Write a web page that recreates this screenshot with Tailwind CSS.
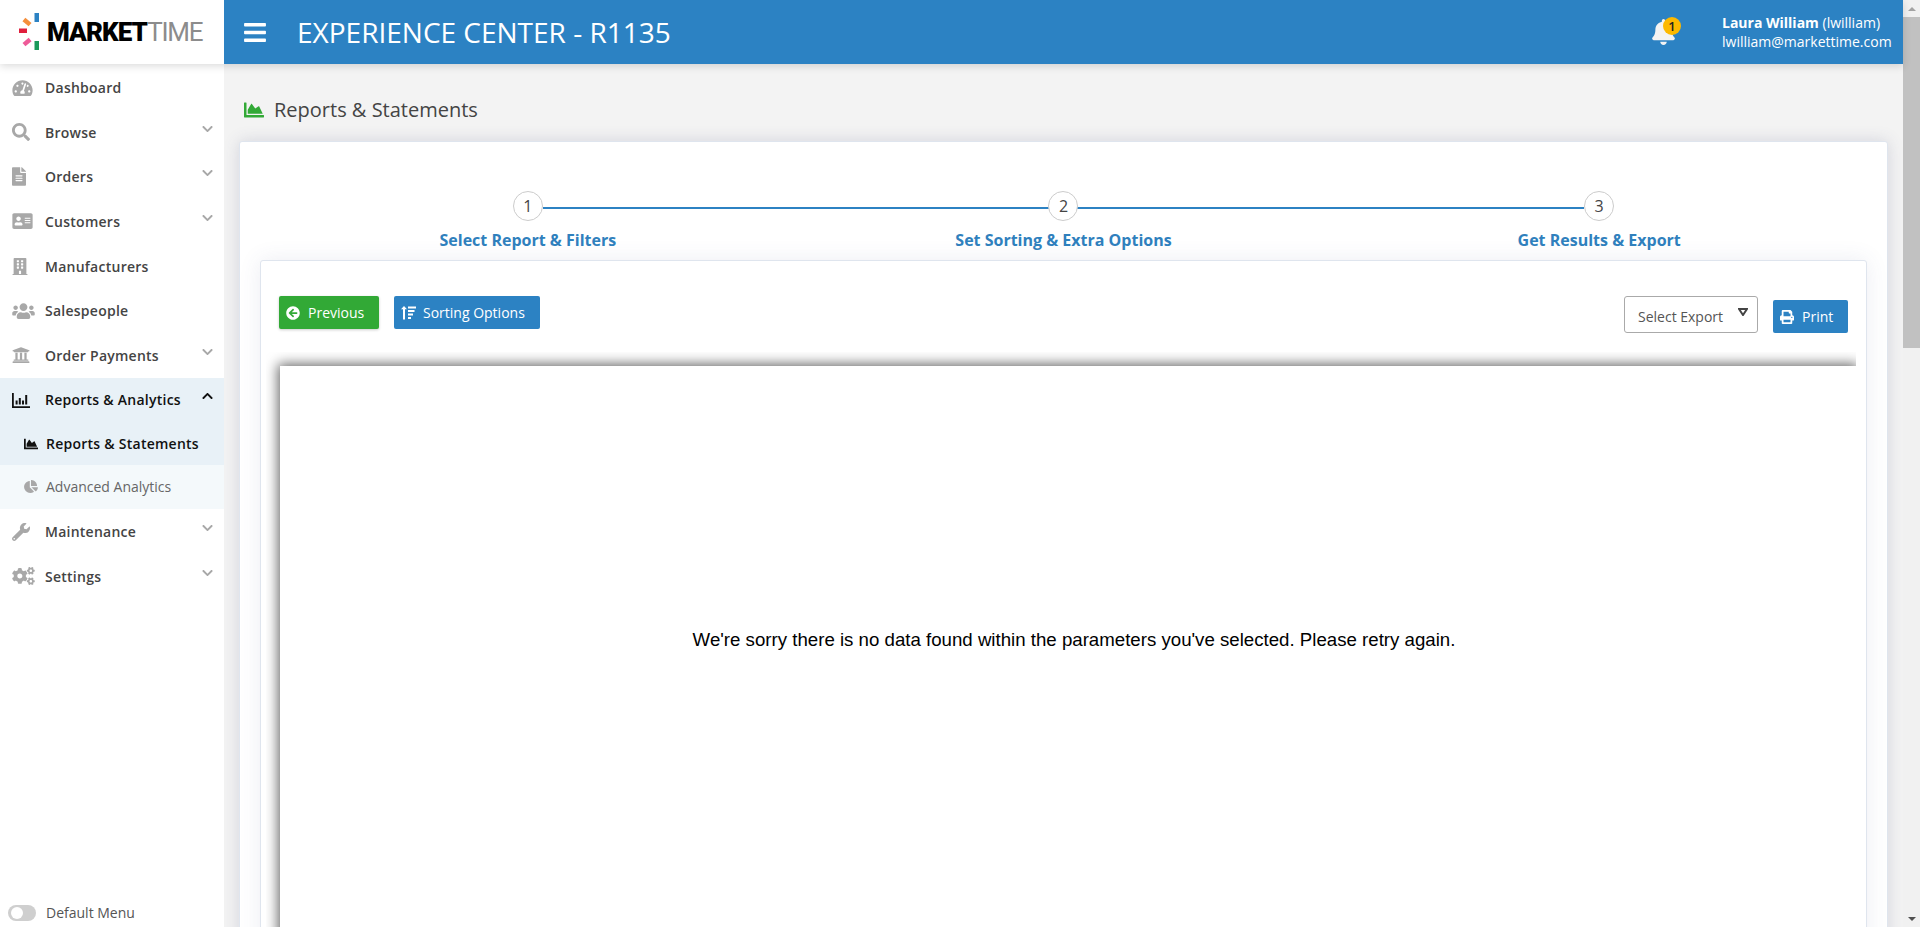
<!DOCTYPE html>
<html lang="en">
<head>
<meta charset="utf-8">
<title>Reports & Statements</title>
<script src="https://cdn.jsdelivr.net/npm/@tailwindcss/browser@4"></script>
</head>
<body class="m-0 overflow-hidden bg-[#f3f3f3] font-['Open_Sans',sans-serif]">
<div class="flex h-[927px] w-[1920px] overflow-hidden">
  <div class="flex h-full w-[1903px] flex-col">
    <!-- Top bar -->
    <header class="relative z-20 flex h-[64px] shrink-0 bg-[#2c82c3] shadow-[0_2px_8px_rgba(0,0,0,0.15)]">
      <div class="flex w-[224px] shrink-0 items-center bg-white pl-[18px]">
        <svg class="h-[38px] w-[24px] shrink-0" viewBox="0 0 24 38">
          <rect x="16.5" y="0" width="4.5" height="9" fill="#2c82c3"/>
          <rect x="16.5" y="28" width="4.5" height="9" fill="#1c9a5b"/>
          <rect x="1" y="15.5" width="8" height="4.5" fill="#e01f3d"/>
          <rect x="5" y="6.8" width="8" height="4.5" fill="#f58f3c" transform="rotate(40 9 9)"/>
          <rect x="5" y="26.8" width="8" height="4.5" fill="#ee5b98" transform="rotate(-40 9 29)"/>
        </svg>
        <span class="ml-[5px] font-['Roboto',sans-serif] text-[26px] leading-none font-black tracking-[-0.9px] text-black">MARKET</span><span class="ml-[0px] font-['Roboto',sans-serif] text-[26px] leading-none font-normal tracking-[-1.2px] text-[#8c8c8c]">TIME</span>
      </div>
      <div class="flex flex-1 items-center">
        <svg class="ml-[20px] h-[25px] w-[22px] fill-white" viewBox="0 0 448 512"><path d="M16 132h416c8.837 0 16-7.163 16-16V76c0-8.837-7.163-16-16-16H16C7.163 60 0 67.163 0 76v40c0 8.837 7.163 16 16 16zm0 160h416c8.837 0 16-7.163 16-16v-40c0-8.837-7.163-16-16-16H16c-8.837 0-16 7.163-16 16v40c0 8.837 7.163 16 16 16zm0 160h416c8.837 0 16-7.163 16-16v-40c0-8.837-7.163-16-16-16H16c-8.837 0-16 7.163-16 16v40c0 8.837 7.163 16 16 16z"/></svg>
        <h1 class="ml-[31px] text-[28px] leading-none font-normal text-white">EXPERIENCE CENTER - R1135</h1>
        <svg class="mr-[47px] ml-auto h-[26px] w-[23px] fill-[#f3f3f3]" viewBox="0 0 448 512"><path d="M224 512c35.32 0 63.97-28.65 63.97-64H160.03c0 35.35 28.65 64 63.97 64zm215.39-149.71c-19.32-20.76-55.47-51.99-55.47-154.29 0-77.7-54.48-139.9-127.94-155.16V32c0-17.67-14.32-32-31.98-32s-31.98 14.33-31.98 32v20.84C118.56 68.1 64.08 130.3 64.08 208c0 102.3-36.15 133.53-55.47 154.29-6 6.45-8.66 14.16-8.61 21.71.11 16.4 12.98 32 32.1 32h383.8c19.12 0 32-15.6 32.1-32 .05-7.55-2.61-15.27-8.61-21.71z"/></svg>
        <div class="mr-[13px] w-[168px] text-[14px] leading-[19px] whitespace-nowrap text-white">
          <div><span class="font-bold">Laura William</span> (lwilliam)</div>
          <div>lwilliam@markettime.com</div>
        </div>
      </div>
      <span class="absolute top-[17px] left-[1663px] flex h-[18px] w-[18px] items-center justify-center rounded-full bg-[#fdb900] text-[13px] leading-none font-semibold text-[#222]">1</span>
    </header>

    <div class="flex min-h-0 flex-1">
      <!-- Sidebar -->
      <aside class="relative z-10 flex w-[224px] shrink-0 flex-col bg-white pt-[1.4px]">
        <nav class="flex flex-col text-[14px] font-semibold tracking-[0.25px] text-[#444]">
          <a class="flex h-[44.6px] items-center pl-[12px]"><span class="flex w-[33px] shrink-0"><svg class="h-[18px] w-[21px] fill-[#a8a8a8]" viewBox="0 0 576 512"><path d="M288 32C128.94 32 0 160.94 0 320c0 52.8 14.25 102.26 39.06 144.8 5.61 9.62 16.3 15.2 27.44 15.2h443c11.14 0 21.83-5.58 27.44-15.2C561.75 422.26 576 372.8 576 320c0-159.06-128.94-288-288-288zm0 64c14.71 0 26.58 10.13 30.32 23.65-1.11 2.26-2.64 4.23-3.45 6.67l-9.22 27.67c-5.13 3.49-10.97 6.01-17.64 6.01-17.67 0-32-14.33-32-32S270.33 96 288 96zM96 384c-17.67 0-32-14.33-32-32s14.33-32 32-32 32 14.33 32 32-14.33 32-32 32zm48-160c-17.67 0-32-14.33-32-32s14.33-32 32-32 32 14.33 32 32-14.33 32-32 32zm246.77-72.41l-61.33 184C343.13 347.33 352 364.54 352 384c0 11.72-3.38 22.55-8.88 32H232.88c-5.5-9.45-8.88-20.28-8.88-32 0-33.94 26.5-61.43 59.9-63.59l61.34-184.01c4.17-12.56 17.73-19.45 30.36-15.17 12.57 4.19 19.35 17.79 15.17 30.36zm14.66 57.2l15.52-46.55c3.47-1.29 7.13-2.23 11.05-2.23 17.67 0 32 14.33 32 32s-14.33 32-32 32c-11.38-.01-20.89-6.28-26.57-15.22zM480 384c-17.67 0-32-14.33-32-32s14.33-32 32-32 32 14.33 32 32-14.33 32-32 32z"/></svg></span>Dashboard</a>

          <a class="flex h-[44.6px] items-center pl-[12px]"><span class="flex w-[33px] shrink-0"><svg class="h-[18px] w-[18px] fill-[#a8a8a8]" viewBox="0 0 512 512"><path d="M505 442.7L405.3 343c-4.5-4.5-10.6-7-17-7H372c27.6-35.3 44-79.7 44-128C416 93.1 322.9 0 208 0S0 93.1 0 208s93.1 208 208 208c48.3 0 92.7-16.4 128-44v16.3c0 6.4 2.5 12.5 7 17l99.7 99.7c9.4 9.4 24.6 9.4 33.9 0l28.3-28.3c9.4-9.4 9.4-24.6.1-34zM208 336c-70.7 0-128-57.2-128-128 0-70.7 57.2-128 128-128 70.7 0 128 57.2 128 128 0 70.7-57.2 128-128 128z"/></svg></span>Browse<svg class="mr-[11px] mb-[7px] ml-auto h-[12px] w-[11px] fill-[#a8a8a8]" viewBox="0 0 448 512"><path d="M207.029 381.476L12.686 187.132c-9.373-9.373-9.373-24.569 0-33.941l22.667-22.667c9.357-9.357 24.522-9.375 33.901-.04L224 284.505l154.745-154.021c9.379-9.335 24.544-9.317 33.901.04l22.667 22.667c9.373 9.373 9.373 24.569 0 33.941L240.971 381.476c-9.373 9.372-24.569 9.372-33.942 0z"/></svg></a>

          <a class="flex h-[44.6px] items-center pl-[12px]"><span class="flex w-[33px] shrink-0"><svg class="h-[19px] w-[14px] fill-[#a8a8a8]" viewBox="0 0 384 512"><path d="M224 136V0H24C10.7 0 0 10.7 0 24v464c0 13.3 10.7 24 24 24h336c13.3 0 24-10.7 24-24V160H248c-13.2 0-24-10.8-24-24zm64 236c0 6.6-5.4 12-12 12H108c-6.6 0-12-5.4-12-12v-8c0-6.6 5.4-12 12-12h168c6.6 0 12 5.4 12 12v8zm0-64c0 6.6-5.4 12-12 12H108c-6.6 0-12-5.4-12-12v-8c0-6.6 5.4-12 12-12h168c6.6 0 12 5.4 12 12v8zm0-72v8c0 6.6-5.4 12-12 12H108c-6.6 0-12-5.4-12-12v-8c0-6.6 5.4-12 12-12h168c6.6 0 12 5.4 12 12zm96-114.1v6.1H256V0h6.1c6.4 0 12.5 2.5 17 7l97.9 98c4.5 4.5 7 10.6 7 16.9z"/></svg></span>Orders<svg class="mr-[11px] mb-[7px] ml-auto h-[12px] w-[11px] fill-[#a8a8a8]" viewBox="0 0 448 512"><path d="M207.029 381.476L12.686 187.132c-9.373-9.373-9.373-24.569 0-33.941l22.667-22.667c9.357-9.357 24.522-9.375 33.901-.04L224 284.505l154.745-154.021c9.379-9.335 24.544-9.317 33.901.04l22.667 22.667c9.373 9.373 9.373 24.569 0 33.941L240.971 381.476c-9.373 9.372-24.569 9.372-33.942 0z"/></svg></a>

          <a class="flex h-[44.6px] items-center pl-[12px]"><span class="flex w-[33px] shrink-0"><svg class="h-[18px] w-[21px] fill-[#a8a8a8]" viewBox="0 0 576 512"><path d="M528 32H48C21.5 32 0 53.5 0 80v352c0 26.5 21.5 48 48 48h480c26.5 0 48-21.5 48-48V80c0-26.5-21.5-48-48-48zm-352 96c35.3 0 64 28.7 64 64s-28.7 64-64 64-64-28.7-64-64 28.7-64 64-64zm112 236.8c0 10.6-10 19.2-22.4 19.2H86.4C74 384 64 375.4 64 364.8v-19.2c0-31.8 30.1-57.6 67.2-57.6h5c12.3 5.1 25.7 8 39.8 8s27.6-2.9 39.8-8h5c37.1 0 67.2 25.8 67.2 57.6v19.2zM512 312c0 4.4-3.6 8-8 8H360c-4.4 0-8-3.6-8-8v-16c0-4.4 3.6-8 8-8h144c4.4 0 8 3.6 8 8v16zm0-64c0 4.4-3.6 8-8 8H360c-4.4 0-8-3.6-8-8v-16c0-4.4 3.6-8 8-8h144c4.4 0 8 3.6 8 8v16zm0-64c0 4.4-3.6 8-8 8H360c-4.4 0-8-3.6-8-8v-16c0-4.4 3.6-8 8-8h144c4.4 0 8 3.6 8 8v16z"/></svg></span>Customers<svg class="mr-[11px] mb-[7px] ml-auto h-[12px] w-[11px] fill-[#a8a8a8]" viewBox="0 0 448 512"><path d="M207.029 381.476L12.686 187.132c-9.373-9.373-9.373-24.569 0-33.941l22.667-22.667c9.357-9.357 24.522-9.375 33.901-.04L224 284.505l154.745-154.021c9.379-9.335 24.544-9.317 33.901.04l22.667 22.667c9.373 9.373 9.373 24.569 0 33.941L240.971 381.476c-9.373 9.372-24.569 9.372-33.942 0z"/></svg></a>

          <a class="flex h-[44.6px] items-center pl-[12px]"><span class="flex w-[33px] shrink-0"><svg class="h-[17px] w-[16px] fill-[#a8a8a8]" viewBox="0 0 448 512"><path d="M436 480h-20V24c0-13.255-10.745-24-24-24H56C42.745 0 32 10.745 32 24v456H12c-6.627 0-12 5.373-12 12v20h448v-20c0-6.627-5.373-12-12-12zM128 76c0-6.627 5.373-12 12-12h40c6.627 0 12 5.373 12 12v40c0 6.627-5.373 12-12 12h-40c-6.627 0-12-5.373-12-12V76zm0 96c0-6.627 5.373-12 12-12h40c6.627 0 12 5.373 12 12v40c0 6.627-5.373 12-12 12h-40c-6.627 0-12-5.373-12-12v-40zm52 148h-40c-6.627 0-12-5.373-12-12v-40c0-6.627 5.373-12 12-12h40c6.627 0 12 5.373 12 12v40c0 6.627-5.373 12-12 12zm76 160h-64v-84c0-6.627 5.373-12 12-12h40c6.627 0 12 5.373 12 12v84zm64-172c0 6.627-5.373 12-12 12h-40c-6.627 0-12-5.373-12-12v-40c0-6.627 5.373-12 12-12h40c6.627 0 12 5.373 12 12v40zm0-96c0 6.627-5.373 12-12 12h-40c-6.627 0-12-5.373-12-12v-40c0-6.627 5.373-12 12-12h40c6.627 0 12 5.373 12 12v40zm0-96c0 6.627-5.373 12-12 12h-40c-6.627 0-12-5.373-12-12V76c0-6.627 5.373-12 12-12h40c6.627 0 12 5.373 12 12v40z"/></svg></span>Manufacturers</a>

          <a class="flex h-[44.6px] items-center pl-[12px]"><span class="flex w-[33px] shrink-0"><svg class="h-[18px] w-[23px] fill-[#a8a8a8]" viewBox="0 0 640 512"><path d="M96 224c35.3 0 64-28.7 64-64s-28.7-64-64-64-64 28.7-64 64 28.7 64 64 64zm448 0c35.3 0 64-28.7 64-64s-28.7-64-64-64-64 28.7-64 64 28.7 64 64 64zm32 32h-64c-17.6 0-33.5 7.1-45.1 18.6 40.3 22.1 68.9 62 75.1 109.4h66c17.7 0 32-14.3 32-32v-32c0-35.3-28.7-64-64-64zm-256 0c61.9 0 112-50.1 112-112S381.9 32 320 32 208 82.1 208 144s50.1 112 112 112zm76.8 32h-8.3c-20.8 10-43.9 16-68.5 16s-47.6-6-68.5-16h-8.3C179.6 288 128 339.6 128 403.2V432c0 26.5 21.5 48 48 48h288c26.5 0 48-21.5 48-48v-28.8c0-63.6-51.6-115.2-115.2-115.2zm-223.7-13.4C161.5 263.1 145.6 256 128 256H64c-35.3 0-64 28.7-64 64v32c0 17.7 14.3 32 32 32h65.9c6.3-47.4 34.9-87.3 75.2-109.4z"/></svg></span>Salespeople</a>

          <a class="flex h-[44.6px] items-center pl-[12px]"><span class="flex w-[33px] shrink-0"><svg class="h-[18px] w-[18px] fill-[#a8a8a8]" viewBox="0 0 512 512"><path d="M496 128v16a8 8 0 0 1-8 8h-24v12c0 6.627-5.373 12-12 12H60c-6.627 0-12-5.373-12-12v-12H24a8 8 0 0 1-8-8v-16a8 8 0 0 1 4.941-7.392l232-88a7.996 7.996 0 0 1 6.118 0l232 88A8 8 0 0 1 496 128zm-24 304H40c-13.255 0-24 10.745-24 24v16a8 8 0 0 0 8 8h464a8 8 0 0 0 8-8v-16c0-13.255-10.745-24-24-24zM96 192v192H60c-6.627 0-12 5.373-12 12v20h416v-20c0-6.627-5.373-12-12-12h-36V192h-64v192h-64V192h-64v192h-64V192H96z"/></svg></span>Order Payments<svg class="mr-[11px] mb-[7px] ml-auto h-[12px] w-[11px] fill-[#a8a8a8]" viewBox="0 0 448 512"><path d="M207.029 381.476L12.686 187.132c-9.373-9.373-9.373-24.569 0-33.941l22.667-22.667c9.357-9.357 24.522-9.375 33.901-.04L224 284.505l154.745-154.021c9.379-9.335 24.544-9.317 33.901.04l22.667 22.667c9.373 9.373 9.373 24.569 0 33.941L240.971 381.476c-9.373 9.372-24.569 9.372-33.942 0z"/></svg></a>

          <a class="flex h-[44.6px] items-center bg-[#e8f1f7] pl-[12px] text-[#111]"><span class="flex w-[33px] shrink-0"><svg class="h-[16px] w-[18px] fill-[#111]" viewBox="0 0 18 16"><path d="M0 1h1.8v13.2H18V16H0z"/><rect x="3.6" y="8.5" width="2" height="4"/><rect x="6.8" y="6" width="2" height="6.5"/><rect x="10" y="8.5" width="2" height="4"/><rect x="13.2" y="3" width="2" height="9.5"/></svg></span>Reports &amp; Analytics<svg class="mr-[11px] mb-[7px] ml-auto h-[12px] w-[11px] rotate-180 fill-[#111]" viewBox="0 0 448 512"><path d="M207.029 381.476L12.686 187.132c-9.373-9.373-9.373-24.569 0-33.941l22.667-22.667c9.357-9.357 24.522-9.375 33.901-.04L224 284.505l154.745-154.021c9.379-9.335 24.544-9.317 33.901.04l22.667 22.667c9.373 9.373 9.373 24.569 0 33.941L240.971 381.476c-9.373 9.372-24.569 9.372-33.942 0z"/></svg></a>

          <a class="flex h-[42.8px] items-center bg-[#e8f1f7] pl-[24px] text-[#111]"><span class="flex w-[22px] shrink-0"><svg class="h-[14px] w-[14px] fill-[#111]" viewBox="0 0 512 512"><path d="M500 384c6.6 0 12 5.4 12 12v40c0 6.6-5.4 12-12 12H12c-6.6 0-12-5.4-12-12V76c0-6.6 5.4-12 12-12h40c6.6 0 12 5.4 12 12v308h436zM372.7 159.5L288 216l-85.3-113.7c-5.1-6.8-15.5-6.3-19.9 1L96 248v104h384l-89.9-187.8c-3.2-6.5-11.4-8.7-17.4-4.7z"/></svg></span>Reports &amp; Statements</a>

          <a class="flex h-[44.4px] items-center bg-[#f4f9fb] pb-[1px] pl-[24px] font-normal tracking-normal text-[#666]"><span class="flex w-[22px] shrink-0"><svg class="h-[13px] w-[14px] fill-[#a8a8a8]" viewBox="0 0 544 512"><path d="M527.79 288H290.5l158.03 158.03c6.04 6.04 15.98 6.53 22.19.68 38.7-36.46 65.32-85.61 73.13-140.86 1.34-9.46-6.51-17.85-16.06-17.85zm-15.83-64.8C503.72 103.74 408.26 8.28 288.8.04 279.68-.59 272 7.1 272 16.24V240h223.77c9.14 0 16.82-7.68 16.19-16.8zM224 288V50.71c0-9.55-8.39-17.4-17.84-16.06C86.99 51.49-4.1 155.6.14 280.37 4.5 408.51 114.83 513.59 243.03 511.98c50.4-.63 96.97-16.87 135.26-44.03 7.9-5.6 8.42-17.23 1.57-24.08L224 288z"/></svg></span>Advanced Analytics</a>

          <a class="flex h-[44.6px] items-center pl-[12px]"><span class="flex w-[33px] shrink-0"><svg class="h-[18px] w-[18px] fill-[#a8a8a8]" viewBox="0 0 512 512"><path d="M507.73 109.1c-2.24-9.03-13.54-12.09-20.12-5.51l-74.36 74.36-67.88-11.31-11.31-67.88 74.36-74.36c6.62-6.62 3.43-17.9-5.66-20.16-47.38-11.74-99.55.91-136.58 37.93-39.64 39.64-50.55 97.1-34.05 147.2L18.74 402.76c-24.99 24.99-24.99 65.51 0 90.5 24.99 24.99 65.51 24.99 90.5 0l213.21-213.21c50.12 16.71 107.47 5.68 147.37-34.22 37.07-37.07 49.7-89.32 37.91-136.73zM64 472c-13.25 0-24-10.75-24-24 0-13.26 10.75-24 24-24s24 10.74 24 24c0 13.25-10.75 24-24 24z"/></svg></span>Maintenance<svg class="mr-[11px] mb-[7px] ml-auto h-[12px] w-[11px] fill-[#a8a8a8]" viewBox="0 0 448 512"><path d="M207.029 381.476L12.686 187.132c-9.373-9.373-9.373-24.569 0-33.941l22.667-22.667c9.357-9.357 24.522-9.375 33.901-.04L224 284.505l154.745-154.021c9.379-9.335 24.544-9.317 33.901.04l22.667 22.667c9.373 9.373 9.373 24.569 0 33.941L240.971 381.476c-9.373 9.372-24.569 9.372-33.942 0z"/></svg></a>

          <a class="flex h-[44.6px] items-center pl-[12px]"><span class="flex w-[33px] shrink-0"><svg class="h-[18px] w-[23px] fill-[#a8a8a8]" viewBox="0 0 640 512"><path d="M512.1 191l-8.2 14.3c-3 5.3-9.4 7.5-15.1 5.4-11.8-4.4-22.6-10.7-32.1-18.6-4.6-3.8-5.8-10.5-2.8-15.7l8.2-14.3c-6.9-8-12.3-17.3-15.9-27.4h-16.5c-6 0-11.2-4.3-12.2-10.3-2-12-2.1-24.6 0-37.1 1-6 6.2-10.4 12.2-10.4h16.5c3.6-10.1 9-19.4 15.9-27.4l-8.2-14.3c-3-5.2-1.9-11.9 2.8-15.7 9.5-7.9 20.4-14.2 32.1-18.6 5.7-2.1 12.1.1 15.1 5.4l8.2 14.3c10.5-1.9 21.2-1.9 31.7 0L552 6.3c3-5.3 9.4-7.5 15.1-5.4 11.8 4.4 22.6 10.7 32.1 18.6 4.6 3.8 5.8 10.5 2.8 15.7l-8.2 14.3c6.9 8 12.3 17.3 15.9 27.4h16.5c6 0 11.2 4.3 12.2 10.3 2 12 2.1 24.6 0 37.1-1 6-6.2 10.4-12.2 10.4h-16.5c-3.6 10.1-9 19.4-15.9 27.4l8.2 14.3c3 5.2 1.9 11.9-2.8 15.7-9.5 7.9-20.4 14.2-32.1 18.6-5.7 2.1-12.1-.1-15.1-5.4l-8.2-14.3c-10.4 1.9-21.2 1.9-31.7 0zm-10.5-58.8c38.5 29.6 82.4-14.3 52.8-52.8-38.5-29.7-82.4 14.3-52.8 52.8zM386.3 286.1l33.7 16.8c10.1 5.8 14.5 18.1 10.5 29.1-8.9 24.2-26.4 46.4-42.6 65.8-7.4 8.9-20.2 11.1-30.3 5.3l-29.1-16.8c-16 13.7-34.6 24.6-54.9 31.7v33.6c0 11.6-8.3 21.6-19.7 23.6-24.6 4.2-50.4 4.4-75.9 0-11.5-2-20-11.9-20-23.6V418c-20.3-7.2-38.9-18-54.9-31.7L74 403c-10 5.8-22.9 3.6-30.3-5.3-16.2-19.4-33.3-41.6-42.2-65.7-4-10.9.4-23.2 10.5-29.1l33.3-16.8c-3.9-20.9-3.9-42.4 0-63.4L12 205.8c-10.1-5.8-14.6-18.1-10.5-29 8.9-24.2 26-46.4 42.2-65.8 7.4-8.9 20.2-11.1 30.3-5.3l29.1 16.8c16-13.7 34.6-24.6 54.9-31.7V57.1c0-11.5 8.2-21.5 19.6-23.5 24.6-4.2 50.5-4.4 76-.1 11.5 2 20 11.9 20 23.6v33.6c20.3 7.2 38.9 18 54.9 31.7l29.1-16.8c10-5.8 22.9-3.6 30.3 5.3 16.2 19.4 33.2 41.6 42.1 65.8 4 10.9.1 23.2-10 29.1l-33.7 16.8c3.9 21 3.9 42.5 0 63.5zm-117.6 21.1c59.2-77-28.7-164.9-105.7-105.7-59.2 77 28.7 164.9 105.7 105.7zm243.4 182.7l-8.2 14.3c-3 5.3-9.4 7.5-15.1 5.4-11.8-4.4-22.6-10.7-32.1-18.6-4.6-3.8-5.8-10.5-2.8-15.7l8.2-14.3c-6.9-8-12.3-17.3-15.9-27.4h-16.5c-6 0-11.2-4.3-12.2-10.3-2-12-2.1-24.6 0-37.1 1-6 6.2-10.4 12.2-10.4h16.5c3.6-10.1 9-19.4 15.9-27.4l-8.2-14.3c-3-5.2-1.9-11.9 2.8-15.7 9.5-7.9 20.4-14.2 32.1-18.6 5.7-2.1 12.1.1 15.1 5.4l8.2 14.3c10.5-1.9 21.2-1.9 31.7 0l8.2-14.3c3-5.3 9.4-7.5 15.1-5.4 11.8 4.4 22.6 10.7 32.1 18.6 4.6 3.8 5.8 10.5 2.8 15.7l-8.2 14.3c6.9 8 12.3 17.3 15.9 27.4h16.5c6 0 11.2 4.3 12.2 10.3 2 12 2.1 24.6 0 37.1-1 6-6.2 10.4-12.2 10.4h-16.5c-3.6 10.1-9 19.4-15.9 27.4l8.2 14.3c3 5.2 1.9 11.9-2.8 15.7-9.5 7.9-20.4 14.2-32.1 18.6-5.7 2.1-12.1-.1-15.1-5.4l-8.2-14.3c-10.4 1.9-21.2 1.9-31.7 0zM501.6 431c38.5 29.6 82.4-14.3 52.8-52.8-38.5-29.6-82.4 14.3-52.8 52.8z"/></svg></span>Settings<svg class="mr-[11px] mb-[7px] ml-auto h-[12px] w-[11px] fill-[#a8a8a8]" viewBox="0 0 448 512"><path d="M207.029 381.476L12.686 187.132c-9.373-9.373-9.373-24.569 0-33.941l22.667-22.667c9.357-9.357 24.522-9.375 33.901-.04L224 284.505l154.745-154.021c9.379-9.335 24.544-9.317 33.901.04l22.667 22.667c9.373 9.373 9.373 24.569 0 33.941L240.971 381.476c-9.373 9.372-24.569 9.372-33.942 0z"/></svg></a>
        </nav>
        <div class="mt-auto mb-[4px] flex items-center pl-[8px] text-[14px] text-[#555]">
          <span class="flex h-[16px] w-[28px] items-center rounded-full bg-[#cfcfcf] pl-[3px]"><span class="h-[12px] w-[12px] rounded-full bg-white"></span></span>
          <span class="ml-[10px]">Default Menu</span>
        </div>
      </aside>

      <!-- Main -->
      <main class="min-w-0 flex-1 overflow-hidden px-[15px]">
        <div class="flex h-[77px] items-center pt-[14px] pl-[5px]">
          <svg class="h-[20px] w-[20px] fill-[#32a936]" viewBox="0 0 512 512"><path d="M500 384c6.6 0 12 5.4 12 12v40c0 6.6-5.4 12-12 12H12c-6.6 0-12-5.4-12-12V76c0-6.6 5.4-12 12-12h40c6.6 0 12 5.4 12 12v308h436zM372.7 159.5L288 216l-85.3-113.7c-5.1-6.8-15.5-6.3-19.9 1L96 248v104h384l-89.9-187.8c-3.2-6.5-11.4-8.7-17.4-4.7z"/></svg>
          <h2 class="ml-[10px] text-[20px] font-normal text-[#444]">Reports &amp; Statements</h2>
        </div>

        <section class="h-[1000px] rounded-[3px] border border-[#dfe5ee] bg-white px-[20px] shadow-[0_0_16px_rgba(70,80,120,0.18)]">
          <div class="relative grid grid-cols-3 pt-[49px]">
            <div class="absolute top-[65px] right-[283px] left-[283px] h-[2px] bg-[#2c82c3]"></div>
            <div class="relative flex flex-col items-center">
              <span class="flex h-[30px] w-[30px] items-center justify-center rounded-full border border-[#cccccc] bg-white text-[16px] text-[#444]">1</span>
              <span class="mt-[7px] text-[16px] leading-[24px] font-bold text-[#2f80bd]">Select Report &amp; Filters</span>
            </div>
            <div class="relative flex flex-col items-center">
              <span class="flex h-[30px] w-[30px] items-center justify-center rounded-full border border-[#cccccc] bg-white text-[16px] text-[#444]">2</span>
              <span class="mt-[7px] text-[16px] leading-[24px] font-bold text-[#2f80bd]">Set Sorting &amp; Extra Options</span>
            </div>
            <div class="relative flex flex-col items-center">
              <span class="flex h-[30px] w-[30px] items-center justify-center rounded-full border border-[#cccccc] bg-white text-[16px] text-[#444]">3</span>
              <span class="mt-[7px] text-[16px] leading-[24px] font-bold text-[#2f80bd]">Get Results &amp; Export</span>
            </div>
          </div>

          <div class="mt-[8px] h-[900px] rounded-[3px] border border-[#dfe5ee] bg-white pr-[10px] pl-[18px] shadow-[0_0_22px_rgba(70,80,140,0.1)]">
            <div class="flex items-start pt-[35px] pr-[8px]">
              <button class="flex h-[33px] w-[100px] items-center rounded-[2px] bg-[#32a936] pl-[7px] text-[14px] text-white shadow-[0_1px_3px_rgba(0,0,0,0.2)]">
                <svg class="h-[14px] w-[14px] fill-white" viewBox="0 0 512 512"><path d="M256 504C119 504 8 393 8 256S119 8 256 8s248 111 248 248-111 248-248 248zm28.9-143.6L209.4 288H392c13.3 0 24-10.7 24-24v-16c0-13.3-10.7-24-24-24H209.4l75.5-72.4c9.7-9.3 9.9-24.8.4-34.3l-11-10.9c-9.4-9.4-24.6-9.4-33.9 0L107.7 239c-9.4 9.4-9.4 24.6 0 33.9l132.7 132.7c9.4 9.4 24.6 9.4 33.9 0l11-10.9c9.5-9.5 9.3-25-.4-34.3z"/></svg>
                <span class="ml-[8px]">Previous</span>
              </button>
              <button class="ml-[15px] flex h-[33px] w-[146px] items-center rounded-[2px] bg-[#2c82c3] pl-[7px] text-[14px] text-white">
                <svg class="h-[14px] w-[15px] fill-white" viewBox="0 0 15 14"><path d="M3 0l3 3.2H4v10.3H2V3.2H0z"/><rect x="7" y="0.5" width="8" height="2"/><rect x="7" y="4" width="6.5" height="2"/><rect x="7" y="7.5" width="5" height="2"/><rect x="7" y="11" width="3" height="2"/></svg>
                <span class="ml-[7px]">Sorting Options</span>
              </button>
              <div class="ml-auto flex h-[37px] w-[134px] items-center rounded-[3px] border border-[#aaaaaa] pt-[3px] pl-[13px] text-[14px] text-[#555]">
                Select Export
                <svg class="mr-[9px] mb-[9px] ml-auto h-[8px] w-[10px]" viewBox="0 0 10 8"><path d="M1 1h8L5 7z" fill="none" stroke="#444" stroke-width="2"/></svg>
              </div>
              <button class="mt-[4px] ml-[15px] flex h-[33px] w-[75px] items-center rounded-[2px] bg-[#2c82c3] pl-[7px] text-[14px] text-white">
                <svg class="h-[14px] w-[14px] fill-white" viewBox="0 0 512 512"><path d="M448 192V77.25c0-8.49-3.37-16.62-9.37-22.63L393.37 9.37c-6-6-14.14-9.37-22.63-9.37H96C78.33 0 64 14.33 64 32v160c-35.35 0-64 28.65-64 64v112c0 8.84 7.16 16 16 16h48v96c0 17.67 14.33 32 32 32h320c17.67 0 32-14.33 32-32v-96h48c8.84 0 16-7.16 16-16V256c0-35.35-28.65-64-64-64zm-64 256H128v-96h256v96zm0-224H128V64h192v48c0 8.84 7.16 16 16 16h48v96zm48 72c-13.25 0-24-10.75-24-24 0-13.26 10.75-24 24-24s24 10.74 24 24c0 13.25-10.75 24-24 24z"/></svg>
                <span class="ml-[8px]">Print</span>
              </button>
            </div>
            <div class="mt-[33px] ml-[1px] flex h-[800px] justify-center bg-white pt-[262px] pl-[12px] font-['Liberation_Sans',sans-serif] text-[18.67px] leading-[24px] text-black shadow-[0_0_12px_2px_rgba(0,0,0,0.6)] [clip-path:inset(-14px_0_-14px_-14px)]">
              We're sorry there is no data found within the parameters you've selected. Please retry again.
            </div>
          </div>
        </section>
      </main>
    </div>
  </div>

  <!-- Scrollbar -->
  <div class="relative flex h-full w-[17px] shrink-0 flex-col bg-[#f1f1f1]">
    <div class="flex h-[17px] items-center justify-center"><span class="h-0 w-0 border-x-[4px] border-b-[4px] border-x-transparent border-b-[#a3a3a3]"></span></div>
    <div class="h-[331px] bg-[#c1c1c1]"></div>
    <div class="mt-auto flex h-[17px] items-center justify-center"><span class="h-0 w-0 border-x-[4px] border-t-[4px] border-x-transparent border-t-[#505050]"></span></div>
  </div>
</div>
</body>
</html>
